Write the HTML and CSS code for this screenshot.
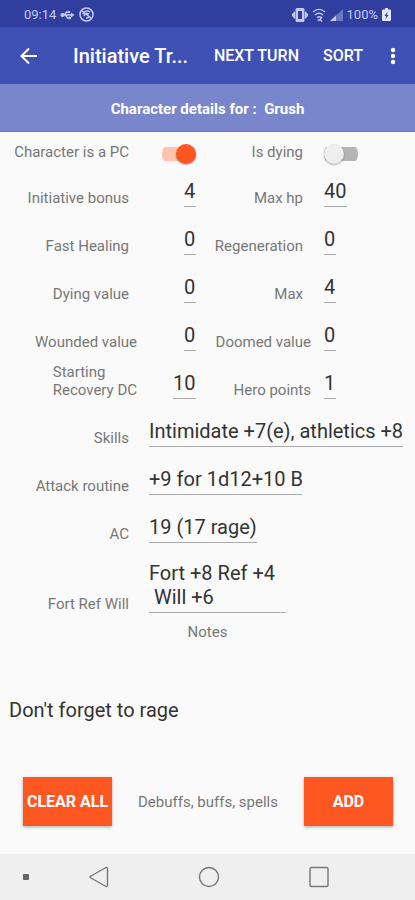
FILE: index.html
```html
<!DOCTYPE html>
<html lang="en">
<head>
<meta charset="utf-8">
<meta name="viewport" content="width=device-width, initial-scale=1">
<title>Initiative Tracker</title>
<link rel="stylesheet" href="styles.css">
</head>
<body>
<div class="status">
  <time>09:14</time>
  <svg width="15" height="14" viewBox="0 0 14 14" fill="none" stroke="currentColor" stroke-width="1.400"><path d="M2 7h9M4 7l2-3h2M5 7l2 3h2"/><circle cx="2" cy="7" r="1.400" fill="currentColor"/><path d="M10.500 4.500l3.500 2.500-3.500 2.500z" fill="currentColor" stroke="none"/><circle cx="8.500" cy="4" r="1.200" fill="currentColor" stroke="none"/><path d="M8 8.700h2.500v2.500H8z" fill="currentColor" stroke="none"/></svg>
  <svg width="15" height="15" viewBox="0 0 15 15" fill="none" stroke="currentColor" stroke-width="1.500"><circle cx="7.500" cy="7.500" r="6.500"/><path d="M4 7c1-3 4-4 7-2M5 9c1-3 3-3 5-2M3 4l9 7M7 11c1 0 2 0 3-1"/></svg>
  <span class="spacer"></span>
  <svg width="16" height="14" viewBox="0 0 16 14" fill="currentColor"><path d="M3 3v8L0 8V6zM13 3v8l3-3V6z"/><path d="M5 0h6a1.500 1.500 0 0 1 1.500 1.500v11A1.500 1.500 0 0 1 11 14H5a1.500 1.500 0 0 1-1.500-1.500v-11A1.500 1.500 0 0 1 5 0zm1 3v8h4V3z" fill-rule="evenodd"/></svg>
  <svg width="14" height="14" viewBox="0 0 14 14" fill="none" stroke="currentColor" stroke-width="1.400"><path d="M1 4c4-3.500 8-3.500 12 0M3 7c3-2.500 5-2.500 8 0M5 9.500c1.500-1 3-1 4 0"/><path d="M10 9l-2 2.500 2 2M5.500 12h3"/></svg>
  <svg width="13" height="12" viewBox="0 0 13 12" fill="currentColor"><path d="M13 0v12H0z" opacity=".4"/><path d="M6 6.500V12H0z"/></svg>
  <span>100%</span>
  <svg width="9" height="13" viewBox="0 0 9 13"><path d="M3 0h3v1.500h2a1 1 0 0 1 1 1V12a1 1 0 0 1-1 1H1a1 1 0 0 1-1-1V2.500a1 1 0 0 1 1-1h2z" fill="#e4e7f7"/><path d="M5.500 3.500L2.500 8h1.700L3.500 11.500l3-4.500H4.800z" fill="#303f9f"/></svg>
</div>
<header class="appbar">
  <button class="icon" aria-label="Back"><svg width="20" height="20" viewBox="0 0 20 20" fill="none" stroke="currentColor" stroke-width="2"><path d="M18 10H3M10 2.500L2.500 10l7.500 7.500"/></svg></button>
  <h1>Initiative Tr...</h1>
  <button class="action">NEXT TURN</button>
  <button class="action">SORT</button>
  <button class="icon more" aria-label="More options"><svg width="6" height="18" viewBox="0 0 6 18" fill="currentColor"><circle cx="3" cy="3" r="2.200"/><circle cx="3" cy="9" r="2.200"/><circle cx="3" cy="15" r="2.200"/></svg></button>
</header>
<h2 class="banner">Character details for :&nbsp; Grush</h2>
<main>
  <form class="details">
    <div class="row switches">
      <label for="pc">Character is a PC</label><input class="switch" type="checkbox" id="pc" checked>
      <label for="dying">Is dying</label><input class="switch" type="checkbox" id="dying">
    </div>
    <div class="row">
      <label for="init">Initiative bonus</label><input class="one" id="init" value="4">
      <label for="hp">Max hp</label><input class="two" id="hp" value="40">
    </div>
    <div class="row">
      <label for="fast">Fast Healing</label><input class="one" id="fast" value="0">
      <label for="regen">Regeneration</label><input class="one" id="regen" value="0">
    </div>
    <div class="row">
      <label for="dval">Dying value</label><input class="one" id="dval" value="0">
      <label for="max">Max</label><input class="one" id="max" value="4">
    </div>
    <div class="row wide">
      <label for="wound">Wounded value</label><input class="one" id="wound" value="0">
      <label for="doom">Doomed value</label><input class="one" id="doom" value="0">
    </div>
    <div class="row wide">
      <label for="dc" class="multi">Starting<br>Recovery DC</label><input class="two" id="dc" value="10">
      <label for="hero">Hero points</label><input class="one" id="hero" value="1">
    </div>
    <div class="row long"><label for="skills">Skills</label><input id="skills" value="Intimidate +7(e), athletics +8"></div>
    <div class="row long"><label for="attack">Attack routine</label><input class="attack" id="attack" value="+9 for 1d12+10 B"></div>
    <div class="row long"><label for="ac">AC</label><input class="ac" id="ac" value="19 (17 rage)"></div>
    <div class="row long saves"><label for="saves">Fort Ref Will</label><textarea id="saves" rows="2">Fort +8 Ref +4
 Will +6</textarea></div>
    <label class="notes-label" for="notes">Notes</label>
    <textarea class="notes" id="notes">Don't forget to rage</textarea>
  </form>
  <div class="effects">
    <button>CLEAR ALL</button>
    <span>Debuffs, buffs, spells</span>
    <button>ADD</button>
  </div>
</main>
<nav class="system">
  <span class="dot"></span>
  <button aria-label="Back"><svg width="22" height="22" viewBox="0 0 22 22" fill="none" stroke="currentColor" stroke-width="1.400" stroke-linejoin="round"><path d="M18 1.500Q19.500 1 19.500 3v16q0 2-1.500 1.500L3 12q-2-1 0-2z"/></svg></button>
  <button aria-label="Home"><svg width="22" height="22" viewBox="0 0 22 22" fill="none" stroke="currentColor" stroke-width="1.400"><circle cx="11" cy="11" r="9.500"/></svg></button>
  <button aria-label="Recent apps"><svg width="22" height="22" viewBox="0 0 22 22" fill="none" stroke="currentColor" stroke-width="1.400"><rect x="2" y="1.500" width="18" height="19" rx="1.500"/></svg></button>
</nav>
</body>
</html>
```
FILE: styles.css
```css
* { box-sizing: border-box; }
body {
  margin: 0;
  min-height: 100vh;
  display: flex;
  flex-direction: column;
  background: #fafafa;
  color: #777;
  font: 15px/18px Roboto, sans-serif;
}
button, input, textarea { font: inherit; color: inherit; border: 0; padding: 0; margin: 0; background: none; }
svg { display: block; }

.status {
  display: flex;
  align-items: center;
  gap: 4px;
  height: 27px;
  padding: 2px 24px 0;
  background: #303f9f;
  color: #c5caeb;
  font-size: 13px;
}
.spacer { flex: 1; }

.appbar {
  display: flex;
  align-items: center;
  height: 57px;
  padding: 0 19px;
  background: #3f51b5;
  color: #fff;
}
.appbar h1 { flex: 1; margin: 0 0 0 34px; font-size: 20px; line-height: 24px; font-weight: 500; white-space: nowrap; }
.action { margin-right: 24px; font-size: 16px; font-weight: 500; }
.more { margin-left: 3px; }

.banner {
  margin: 0;
  height: 48px;
  border-bottom: 1px solid #6473c3;
  background: #7986cb;
  color: #fff;
  font-size: 15px;
  line-height: 50px;
  font-weight: 700;
  text-align: center;
}

main, .details { flex: 1; display: flex; flex-direction: column; }
.row {
  display: grid;
  grid-template-columns: 137fr 59fr 115fr 92fr;
  align-items: end;
  height: 48px;
  padding-right: 12px;
}
.row label { padding-right: 8px; text-align: right; }
.wide label { padding-right: 0; }
.row .multi { justify-self: end; text-align: left; }
.row input, .saves textarea {
  height: 29px;
  padding-bottom: 3px;
  border-bottom: 1px solid #aaa;
  border-radius: 0;
  color: #333;
  font-size: 20px;
  line-height: 24px;
}
.row input:nth-child(2) { justify-self: end; }
.row input:nth-child(4) { margin-left: 13px; }
.row .one { width: 12px; }
.row .two { width: 23px; }

.row.switches { height: 27px; align-items: start; padding-top: 11px; }
.row .switch {
  appearance: none;
  display: grid;
  align-items: center;
  width: 34px;
  height: 22px;
  padding: 0;
  border: 0;
  background: linear-gradient(#b4b4b4, #b4b4b4) center / 100% 14px no-repeat;
  border-radius: 10px;
}
.switch::before {
  content: "";
  width: 20px;
  height: 20px;
  border-radius: 50%;
  background: #eee;
  box-shadow: 0 1px 2px #0005;
}
.row .switch:checked { background-image: linear-gradient(#ffc4b0, #ffc4b0); }
.switch:checked::before { justify-self: end; background: #ff5722; }

.row.long { grid-template-columns: 137fr 266fr; }
.row.long input, .saves textarea { justify-self: start; width: calc(100% - 12px); margin-left: 12px; }
.row.long .attack { width: 153px; }
.row.long .ac { width: 108px; }
.row.saves { height: 70px; }
.row.saves textarea { width: 137px; height: 52px; resize: none; overflow: hidden; }

.notes-label { margin-top: 10px; text-align: center; }
.notes {
  flex: 1;
  margin: 57px 9px 0;
  color: #333;
  font-size: 20px;
  line-height: 24px;
  resize: none;
}

.effects { display: flex; align-items: center; justify-content: space-between; padding: 0 22px 28px 23px; }
.effects button {
  width: 89px;
  height: 49px;
  background: #ff5722;
  color: #fff;
  font-size: 16px;
  font-weight: 700;
  box-shadow: 0 1px 3px #0005;
}

.system {
  display: grid;
  grid-template-columns: 44px repeat(3, 1fr) 41px;
  align-items: center;
  justify-items: center;
  height: 46px;
  background: #efefef;
  color: #777;
}
.dot { justify-self: end; width: 6px; height: 6px; margin-right: 15px; border-radius: 1px; background: #666; }
```
